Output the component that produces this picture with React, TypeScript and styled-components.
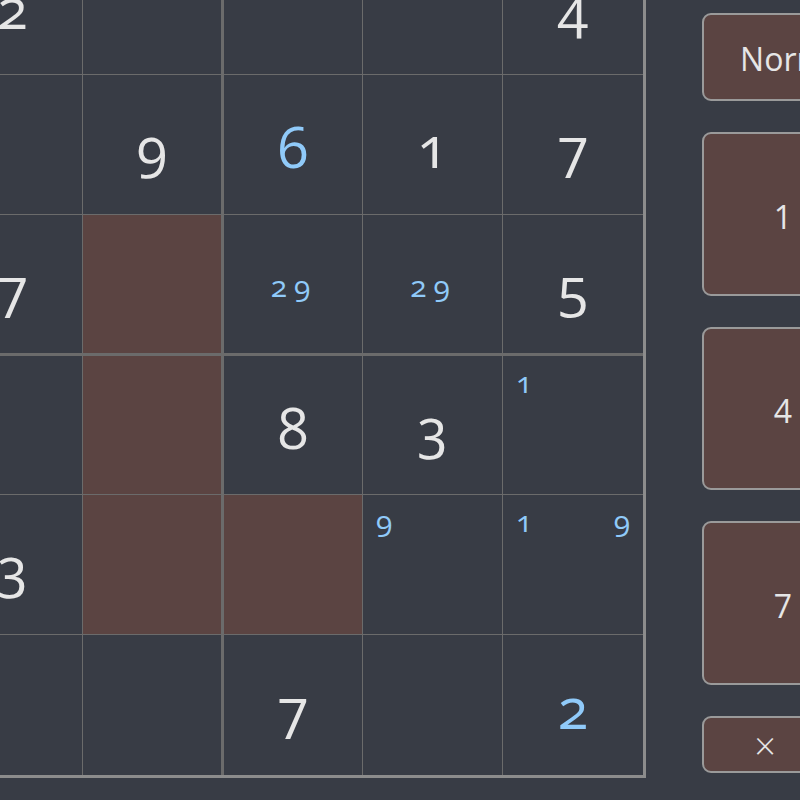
import React from "react";
import styled, { createGlobalStyle } from "styled-components";

const BG = "#383c45";
const BROWN = "#5b4442";
const LINE = "#6b6b6b";
const WHITE = "#e6e6e6";
const BLUE = "#90caf9";

const GlobalStyle = createGlobalStyle`
  html, body {
    margin: 0;
    padding: 0;
    background: ${BG};
    overflow: hidden;
    font-family: "Open Sans", "Noto Sans", sans-serif;
    font-variant-numeric: oldstyle-nums;
    font-feature-settings: "onum" 1;
  }
`;

const Page = styled.div`
  display: flex;
  align-items: flex-end;
  width: max-content;
  margin: -488px 0 0 -620px;
`;

const Board = styled.div`
  display: grid;
  grid-template-columns: repeat(9, 140px);
  grid-template-rows: repeat(9, 140px);
  border: 3px solid #8c8c8c;
  background: ${BG};
`;

const Cell = styled.div<{ $row: number; $col: number; $hl?: boolean }>`
  box-sizing: border-box;
  display: grid;
  place-items: center;
  background: ${(p) => (p.$hl ? BROWN : "transparent")};
  border-right: ${(p) => (p.$col === 8 ? 0 : p.$col % 3 === 2 ? 2 : 1)}px solid ${LINE};
  border-left: ${(p) => (p.$col % 3 === 0 && p.$col > 0 ? 1 : 0)}px solid ${LINE};
  border-bottom: ${(p) => (p.$row === 8 ? 0 : p.$row % 3 === 2 ? 2 : 1)}px solid ${LINE};
  border-top: ${(p) => (p.$row % 3 === 0 && p.$row > 0 ? 1 : 0)}px solid ${LINE};
`;

const Digit = styled.span<{ $user?: boolean }>`
  font-size: 56px;
  line-height: normal;
  margin-top: 3px;
  color: ${(p) => (p.$user ? BLUE : WHITE)};
`;

const CenterMarks = styled.div`
  display: flex;
  gap: 7px;
  margin: 3px 5px 0 0;
  font-size: 30px;
  line-height: normal;
  color: ${BLUE};
`;

const CornerGrid = styled.div`
  box-sizing: border-box;
  align-self: stretch;
  justify-self: stretch;
  display: grid;
  grid-template-columns: 1fr 1fr 1fr;
  grid-template-rows: 1fr 1fr 1fr;
  padding: 5px 13px 6px 13px;
  font-size: 30px;
  line-height: normal;
  color: ${BLUE};
`;

const CORNER_SLOTS: Array<[number, number, string, string]> = [
  [1, 1, "start", "start"],
  [1, 3, "end", "start"],
  [3, 1, "start", "end"],
  [3, 3, "end", "end"],
  [1, 2, "center", "start"],
  [3, 2, "center", "end"],
  [2, 1, "start", "center"],
  [2, 3, "end", "center"],
];

const CornerMark = styled.span<{ $slot: number }>`
  grid-row: ${(p) => CORNER_SLOTS[p.$slot][0]};
  grid-column: ${(p) => CORNER_SLOTS[p.$slot][1]};
  justify-self: ${(p) => CORNER_SLOTS[p.$slot][2]};
  align-self: ${(p) => CORNER_SLOTS[p.$slot][3]};
`;

const Panel = styled.div`
  display: flex;
  flex-direction: column;
  gap: 31px;
  margin: 0 0 5px 56px;
`;

const PanelButton = styled.button`
  box-sizing: border-box;
  padding: 0;
  margin: 0;
  border: 2px solid #9a9a9a;
  border-radius: 9px;
  background: ${BROWN};
  color: ${WHITE};
  font-family: inherit;
  font-size: 32px;
  line-height: normal;
  display: flex;
  align-items: center;
  justify-content: center;
  cursor: pointer;
`;

const ModeButton = styled(PanelButton)`
  width: 188px;
  height: 88px;
  padding-top: 2px;
`;

const NumPad = styled.div`
  display: grid;
  grid-template-columns: repeat(3, 162px);
  grid-template-rows: 164px 163px 164px;
  gap: 31px;
`;

const NumButton = styled(PanelButton)`
  width: 100%;
  height: 100%;
  padding-top: 4px;
`;

const ActionRow = styled.div`
  display: flex;
  gap: 31px;
`;

const DeleteButton = styled(PanelButton)`
  width: 126px;
  height: 57px;
  font-size: 38px;
  font-weight: 300;
`;

type CellData =
  | { kind: "given"; v: number }
  | { kind: "user"; v: number }
  | { kind: "center"; marks: number[] }
  | { kind: "corner"; marks: number[] };

const cells: Record<string, CellData> = {
  "3-4": { kind: "given", v: 2 },
  "3-8": { kind: "given", v: 4 },
  "4-5": { kind: "given", v: 9 },
  "4-6": { kind: "user", v: 6 },
  "4-7": { kind: "given", v: 1 },
  "4-8": { kind: "given", v: 7 },
  "5-4": { kind: "given", v: 7 },
  "5-6": { kind: "center", marks: [2, 9] },
  "5-7": { kind: "center", marks: [2, 9] },
  "5-8": { kind: "given", v: 5 },
  "6-6": { kind: "given", v: 8 },
  "6-7": { kind: "given", v: 3 },
  "6-8": { kind: "corner", marks: [1] },
  "7-4": { kind: "given", v: 3 },
  "7-7": { kind: "corner", marks: [9] },
  "7-8": { kind: "corner", marks: [1, 9] },
  "8-6": { kind: "given", v: 7 },
  "8-8": { kind: "user", v: 2 },
};

const highlighted = new Set(["5-5", "6-5", "7-5", "7-6"]);

function CellContent({ data }: { data?: CellData }) {
  if (!data) return null;
  if (data.kind === "given") return <Digit>{data.v}</Digit>;
  if (data.kind === "user") return <Digit $user>{data.v}</Digit>;
  if (data.kind === "center")
    return (
      <CenterMarks>
        {data.marks.map((m) => (
          <span key={m}>{m}</span>
        ))}
      </CenterMarks>
    );
  return (
    <CornerGrid>
      {data.marks.map((m, i) => (
        <CornerMark key={m} $slot={i}>
          {m}
        </CornerMark>
      ))}
    </CornerGrid>
  );
}

export default function App() {
  const rows = Array.from({ length: 9 }, (_, r) => r);
  return (
    <>
      <GlobalStyle />
      <Page>
        <Board>
          {rows.map((r) =>
            rows.map((c) => {
              const key = `${r}-${c}`;
              return (
                <Cell key={key} $row={r} $col={c} $hl={highlighted.has(key)}>
                  <CellContent data={cells[key]} />
                </Cell>
              );
            })
          )}
        </Board>
        <Panel>
          <ModeButton>Normal</ModeButton>
          <NumPad>
            {[1, 2, 3, 4, 5, 6, 7, 8, 9].map((n) => (
              <NumButton key={n}>{n}</NumButton>
            ))}
          </NumPad>
          <ActionRow>
            <DeleteButton>×</DeleteButton>
          </ActionRow>
        </Panel>
      </Page>
    </>
  );
}
